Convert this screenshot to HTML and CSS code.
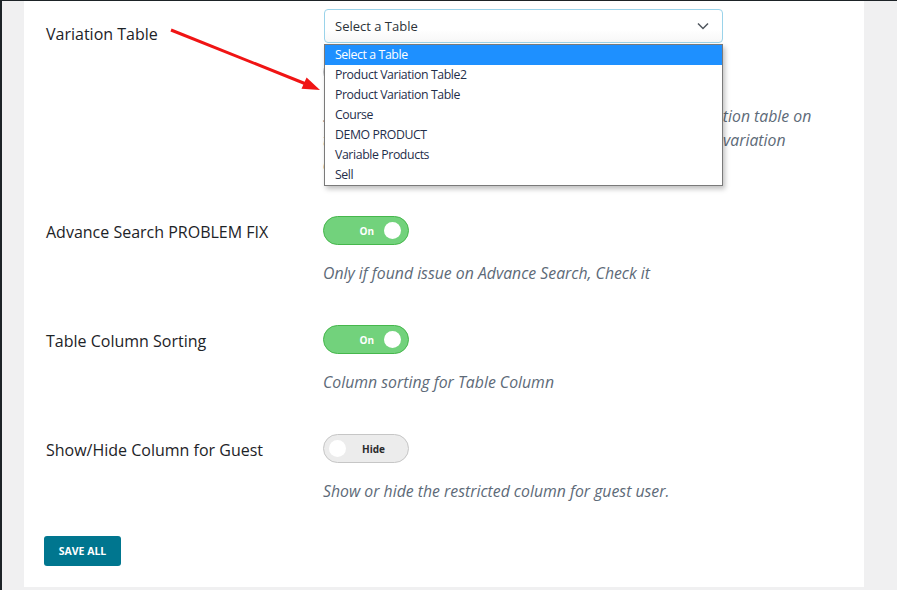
FILE: index.html
```html
<!DOCTYPE html>
<html lang="en">
<head>
<meta charset="utf-8">
<title>Settings</title>
<link rel="stylesheet" href="styles.css">
</head>
<body>
<div class="topline"></div>
<div class="page">
  <div class="admin-edge"></div>
  <div class="wrap">
    <div class="panel">
      <div class="row row-first">
        <div class="label label-first">Variation Table</div>
        <div class="field">
          <div class="select-wrap">
            <div class="select">
              <span>Select a Table</span>
              <svg class="chev" width="12" height="8" viewBox="0 0 12 8"><path d="M1 1.5 L6 6.5 L11 1.5" fill="none" stroke="#50575e" stroke-width="1.5"/></svg>
            </div>
            <ul class="options">
              <li class="active">Select a Table</li>
              <li>Product Variation Table2</li>
              <li>Product Variation Table</li>
              <li>Course</li>
              <li>DEMO PRODUCT</li>
              <li>Variable Products</li>
              <li>Sell</li>
            </ul>
          </div>
          <div class="add-btn"></div>
          <p class="desc">Select a table from this list to show it as the product variation table on<br>the single product pages, instead of the default product's variation<br>dropdown.</p>
        </div>
      </div>

      <div class="row">
        <div class="label">Advance Search PROBLEM FIX</div>
        <div class="field">
          <div class="toggle on"><span class="t-text">On</span><span class="knob"></span></div>
          <p class="desc">Only if found issue on Advance Search, Check it</p>
        </div>
      </div>

      <div class="row">
        <div class="label">Table Column Sorting</div>
        <div class="field">
          <div class="toggle on"><span class="t-text">On</span><span class="knob"></span></div>
          <p class="desc">Column sorting for Table Column</p>
        </div>
      </div>

      <div class="row row-last">
        <div class="label">Show/Hide Column for Guest</div>
        <div class="field">
          <div class="toggle off"><span class="knob"></span><span class="t-text">Hide</span></div>
          <p class="desc">Show or hide the restricted column for guest user.</p>
        </div>
      </div>

      <div class="actions"><button class="save">SAVE ALL</button></div>
    </div>
  </div>
</div>
<svg class="arrow" width="897" height="590" viewBox="0 0 897 590">
  <line x1="171" y1="30" x2="306" y2="84" stroke="#f01414" stroke-width="3"/>
  <polygon points="320,90 301.5,88.8 306.6,77.6" fill="#f01414"/>
</svg>
</body>
</html>
```

FILE: styles.css
```css
* { box-sizing: border-box; }
html, body { margin: 0; padding: 0; }
body {
  background: #f0f0f1;
  font-family: "Open Sans", "Noto Sans", sans-serif;
  color: #1d2327;
  width: 897px;
  height: 590px;
  overflow: hidden;
  position: relative;
}
.topline { height: 1px; background: #1d2327; }
.page { display: flex; }
.admin-edge { width: 2px; background: #1d2327; flex: none; height: 589px; }
.wrap { flex: 1; padding: 0 33px 0 22px; }
.panel {
  background: #fff;
  padding: 8px 20px 20px 20px;
  height: 586px;
  display: flex;
  flex-direction: column;
}
.row { display: flex; margin-bottom: 40px; }
.row-last { margin-bottom: 33px; }
.label {
  width: 279px;
  flex: none;
  padding-left: 2px;
  padding-top: 4px;
  font-size: 16px;
  line-height: 24px;
  color: #1d2327;
}
.label-first { padding-top: 13px; }
.field { flex: 1; min-width: 0; }
.select-wrap { position: relative; width: 399px; margin-left: 1px; }
.select {
  height: 34px;
  border: 1px solid #9ad3ea;
  border-radius: 4px;
  background: linear-gradient(#fff 60%, #f7f7f7);
  display: flex;
  align-items: center;
  justify-content: space-between;
  padding: 0 10px;
  font-size: 13px;
  color: #2c3338;
}
.chev { margin-right: 3px; }
.options {
  position: absolute;
  top: 35px;
  left: 0;
  width: 399px;
  margin: 0;
  padding: 0;
  list-style: none;
  background: #fff;
  border: 1px solid #7a7a7a;
  box-shadow: 2px 3px 5px rgba(0,0,0,0.25);
  z-index: 5;
}
.options li {
  height: 20px;
  line-height: 20px;
  padding-left: 10px;
  font-size: 12.3px;
  letter-spacing: -0.4px;
  color: #1f2e4a;
}
.options li.active { background: #1e90ff; color: #fff; }
.add-btn {
  margin-top: 19px;
  width: 120px;
  height: 20px;
  border: 1px solid #c3c4c7;
  border-radius: 10px;
  background: #f0f0f1;
}
.desc {
  margin: 16px 0 0 0;
  font-style: italic;
  font-size: 15.8px;
  line-height: 24px;
  color: #5d6a78;
  white-space: nowrap;
}
.row-first .desc { margin-top: 22px; }
.toggle {
  width: 86px;
  height: 29px;
  border-radius: 15px;
  display: flex;
  align-items: center;
  font-size: 10px;
  font-weight: 700;
}
.toggle.on {
  background: #72d27c;
  border: 1px solid #46b74c;
  justify-content: flex-end;
  padding-right: 7px;
  gap: 10px;
  color: #fff;
}
.toggle.off {
  background: #ececec;
  border: 1px solid #c6c6c6;
  padding-left: 5px;
  gap: 16px;
  color: #2a2a2a;
}
.knob {
  width: 17px;
  height: 17px;
  border-radius: 50%;
  background: #fff;
  flex: none;
}
.actions { display: flex; }
.save {
  width: 77px;
  height: 30px;
  border: none;
  border-radius: 3px;
  background: #00768f;
  color: #fff;
  font-family: "Open Sans", sans-serif;
  font-weight: 700;
  font-size: 10.5px;
  padding: 0;
}
.arrow { position: absolute; left: 0; top: 0; pointer-events: none; z-index: 10; }
```
